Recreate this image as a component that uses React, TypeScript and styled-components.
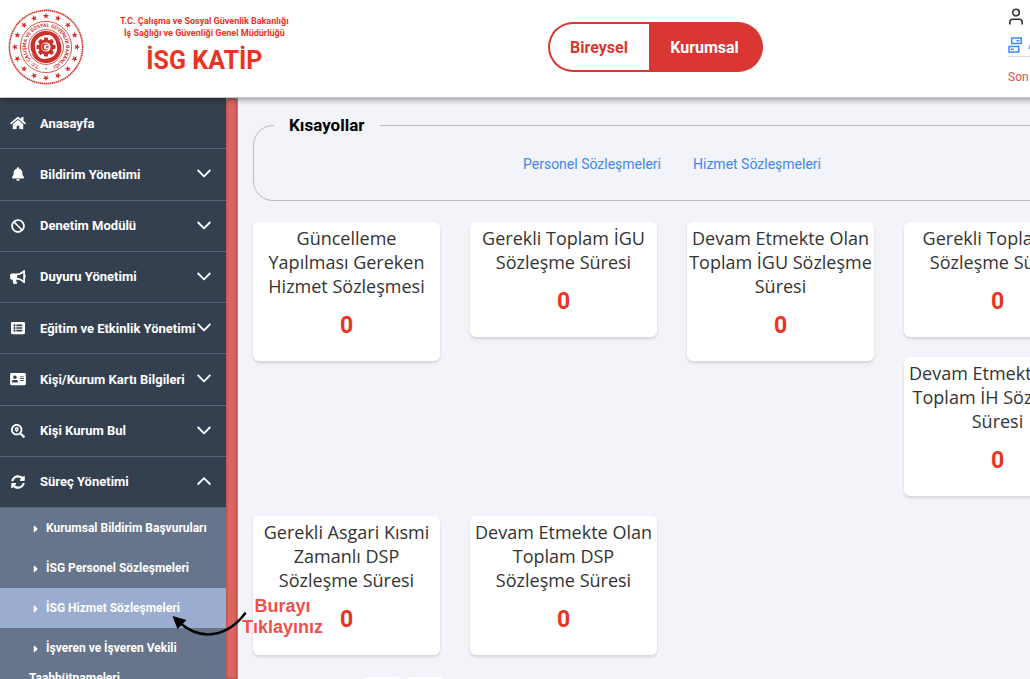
import React from "react";
import styled, { createGlobalStyle } from "styled-components";
import {
  FaHome,
  FaBell,
  FaBan,
  FaBullhorn,
  FaListAlt,
  FaAddressCard,
  FaSearchLocation,
  FaSyncAlt,
  FaCaretRight,
} from "react-icons/fa";

const GlobalStyle = createGlobalStyle`
  * { box-sizing: border-box; }
  body {
    margin: 0;
    background: #f3f4f9;
    font-family: Roboto, "Liberation Sans", sans-serif;
  }
`;

const Shell = styled.div`
  position: relative;
  display: flex;
  flex-direction: column;
  height: 100vh;
  overflow: hidden;
`;

const Header = styled.header`
  position: relative;
  z-index: 2;
  flex: none;
  display: flex;
  align-items: center;
  min-width: 1106px;
  height: 98px;
  padding-left: 8px;
  border-bottom: 1px solid #c4c4c6;
  background: #fff;
  box-shadow: 0 0 8px rgba(0, 0, 0, 0.55);
`;

const Brand = styled.div`
  display: flex;
  align-items: center;
  gap: 36px;
  width: 294px;
  padding-bottom: 4px;
`;

const BrandText = styled.div`
  color: #ec3323;
  font-weight: 700;
  text-align: center;
  white-space: nowrap;
`;

const Ministry = styled.p`
  margin: 0;
  font-size: 9px;
  line-height: 12px;
`;

const AppName = styled.h1`
  margin: 0;
  padding: 6px 0 2px;
  font-size: 25px;
  line-height: 32px;
`;

const Toggle = styled.div`
  display: flex;
  margin: 0 auto 3px;
  padding: 2px;
  height: 50px;
  border-radius: 25px;
  background: #da3732;
`;

const ToggleButton = styled.button<{ $on?: boolean }>`
  width: ${(p) => (p.$on ? 112 : 99)}px;
  padding: 0;
  border: 0;
  border-radius: ${(p) => (p.$on ? "0 23px 23px 0" : "23px 0 0 23px")};
  background: ${(p) => (p.$on ? "#da3732" : "#fff")};
  color: ${(p) => (p.$on ? "#fff" : "#da3732")};
  font: 700 16px Roboto, sans-serif;
`;

const UserBox = styled.div`
  display: flex;
  flex-direction: column;
  align-self: flex-start;
  width: 98px;
  padding-top: 7px;
`;

const UserLine = styled.div<{ $tone: string; $ruled?: boolean }>`
  display: flex;
  align-items: center;
  gap: 5px;
  height: ${(p) => (p.$ruled ? 31 : 19)}px;
  padding-top: ${(p) => (p.$ruled ? 7 : 0)}px;
  border-bottom: ${(p) => (p.$ruled ? "1px solid #dedede" : "0")};
  color: ${(p) => p.$tone};
  font-size: 12px;
`;

const LastLogin = styled.span`
  padding-top: 12px;
  color: #e2504a;
  font-size: 12px;
  line-height: 16px;
`;

const Body = styled.div`
  flex: 1;
  display: flex;
  min-height: 0;
  min-width: 1106px;
`;

const Sidebar = styled.nav`
  flex: none;
  width: 226px;
  overflow: hidden;
  background: #66758b;
  color: #fff;
`;

const MenuList = styled.div`
  display: grid;
  grid-auto-rows: 1fr;
  height: 410px;
  background: #34404f;
`;

const MenuItem = styled.button`
  display: flex;
  align-items: center;
  gap: 14px;
  width: 100%;
  padding: 0 15px 0 10px;
  border: 0;
  border-bottom: 1px solid #5a6678;
  background: none;
  color: #fff;
  font: 700 13px Roboto, sans-serif;
  text-align: left;
  white-space: nowrap;

  > svg:first-child {
    flex: none;
    width: 16px;
  }
`;

const MenuLabel = styled.span`
  flex: 1;
  width: 0;
`;

const SubItem = styled.a<{ $active?: boolean }>`
  display: block;
  padding: 5px 10px 5px 29px;
  background: ${(p) => (p.$active ? "#9aadd0" : "transparent")};
  color: #fff;
  font-size: 12px;
  font-weight: 700;
  line-height: 30px;
  text-decoration: none;

  svg {
    margin: 0 4px 0 1px;
    vertical-align: -3px;
  }
`;

const ScrollTrack = styled.div`
  flex: none;
  width: 12px;
  border-right: 1px solid #8592a8;
  background: #8592a8;
`;

const ScrollThumb = styled.div`
  height: 100%;
  border-radius: 5px 5px 0 0;
  background: #db6661;
  box-shadow: inset 0 0 3px rgba(90, 20, 20, 0.55);
`;

const Main = styled.main`
  flex: 1;
  padding: 17px 15px 0;
`;

const Shortcuts = styled.fieldset`
  display: flex;
  justify-content: center;
  gap: 32px;
  min-width: 0;
  height: 86px;
  margin: 0 0 21px;
  padding: 18px 20px;
  border: 1px solid #bbb;
  border-radius: 20px;

  legend {
    padding: 0 15px;
    color: #000;
    font-size: 17px;
    font-weight: 700;
    line-height: 21px;
  }
`;

const ShortcutLink = styled.a`
  color: #4088f0;
  font-size: 14px;
  line-height: 20px;
  text-decoration: none;
`;

const CardGrid = styled.div`
  display: grid;
  grid-template-columns: repeat(4, minmax(187px, 1fr));
  gap: 20px 30px;
  align-items: start;
`;

const Stack = styled.div`
  display: grid;
  gap: 20px;
`;

const Card = styled.section`
  padding: 4px 2px 23px;
  border-radius: 6px;
  background: #fff;
  box-shadow: 0 2px 3px rgba(60, 50, 30, 0.16);
  font-family: "Open Sans", sans-serif;
  text-align: center;
`;

const CardTitle = styled.h2`
  margin: 0 0 16px;
  color: #333;
  font-size: 18px;
  font-weight: 400;
  line-height: 24px;
`;

const CardValue = styled.p`
  margin: 0;
  color: #ec3323;
  font-family: Roboto, sans-serif;
  font-size: 23px;
  font-weight: 700;
  line-height: 24px;
`;

const Pager = styled.div`
  display: flex;
  gap: 5px;
  margin: 22px 0 0 110px;
`;

const PageButton = styled.button`
  width: 38px;
  height: 30px;
  border: 0;
  border-radius: 5px;
  background: #fff;
`;

const Note = styled.p`
  position: absolute;
  z-index: 3;
  left: 242px;
  top: 596px;
  margin: 0;
  color: #ef504a;
  font: 700 18px/21px "Liberation Sans", sans-serif;
  text-align: center;
`;

const NoteArrow = styled.svg`
  position: absolute;
  z-index: 3;
  left: 170px;
  top: 608px;
`;

const starPoints = (cx: number, cy: number, r: number, turn: number) =>
  Array.from({ length: 10 }, (_, i) => {
    const a = turn + (i * Math.PI) / 5;
    const d = i % 2 ? r * 0.4 : r;
    return `${(cx + d * Math.sin(a)).toFixed(2)},${(cy - d * Math.cos(a)).toFixed(2)}`;
  }).join(" ");

const Seal = () => (
  <svg width="76" height="76" viewBox="0 0 76 76" role="img" aria-label="Bakanlık arması">
    <g fill="none" stroke="#cf2f2b">
      <circle cx="38" cy="38" r="36.6" strokeWidth="1.6" strokeDasharray="1.5 0.5" />
      <circle cx="38" cy="38" r="25.6" strokeWidth="0.8" />
      <circle cx="38" cy="38" r="17.4" strokeWidth="0.8" />
    </g>
    <g fill="#cf2f2b">
      {Array.from({ length: 16 }, (_, i) => {
        const a = (i * Math.PI) / 8;
        return <polygon key={i} points={starPoints(38 + 31 * Math.sin(a), 38 - 31 * Math.cos(a), 3.3, a)} />;
      })}
      <path id="seal-ring" d="M32.5 57.2A20 20 0 1 1 43.5 57.2" fill="none" />
      <text fontFamily="Roboto, sans-serif" fontSize="5" fontWeight="700">
        <textPath href="#seal-ring" startOffset="50%" textAnchor="middle">
          T.C. ÇALIŞMA VE SOSYAL GÜVENLİK BAKANLIĞI
        </textPath>
      </text>
      <circle cx="38" cy="59.5" r="0.8" />
      <path d="M22.5 38C22 28 30 21.5 38.5 22C45 22.3 50.5 26 52.5 32C47 25.5 39 25 33 27.5C27 30 26 36 27.5 41C28.5 46 31.5 49 35 51C28 50 23 45 22.5 38Z" />
      <path d="M53.5 38C54 48 46 54.5 37.5 54C31 53.7 25.5 50 23.5 44C29 50.5 37 51 43 48.5C49 46 50 40 48.5 35C47.5 30 44.5 27 41 25C48 26 53 31 53.5 38Z" />
      {Array.from({ length: 8 }, (_, i) => (
        <rect key={i} x="36" y="28.5" width="4" height="5" rx="0.7" transform={`rotate(${i * 45} 38 38)`} />
      ))}
      <circle cx="38" cy="38" r="7.6" />
    </g>
    <circle cx="38" cy="38" r="4.6" fill="#fff" />
    <circle cx="37.3" cy="38" r="3.4" fill="#cf2f2b" />
    <circle cx="38.3" cy="38" r="2.5" fill="#fff" />
    <polygon points={starPoints(39.2, 38, 1.8, -1.57)} fill="#cf2f2b" />
  </svg>
);

const Chevron = ({ up }: { up?: boolean }) => (
  <svg width="14" height="10" viewBox="0 0 14 10" fill="none" stroke="#fff" strokeWidth="1.8" strokeLinecap="round" strokeLinejoin="round" aria-hidden="true">
    <path d={up ? "M1.2 7L7 1.2L12.8 7" : "M1.2 1.5L7 7.3L12.8 1.5"} />
  </svg>
);

const menu = [
  { icon: FaHome, label: "Anasayfa" },
  { icon: FaBell, label: "Bildirim Yönetimi", sub: true },
  { icon: FaBan, label: "Denetim Modülü", sub: true },
  { icon: FaBullhorn, label: "Duyuru Yönetimi", sub: true },
  { icon: FaListAlt, label: "Eğitim ve Etkinlik Yönetimi", sub: true },
  { icon: FaAddressCard, label: "Kişi/Kurum Kartı Bilgileri", sub: true },
  { icon: FaSearchLocation, label: "Kişi Kurum Bul", sub: true },
  { icon: FaSyncAlt, label: "Süreç Yönetimi", sub: true, open: true },
];

const subMenu = [
  "Kurumsal Bildirim Başvuruları",
  "İSG Personel Sözleşmeleri",
  "İSG Hizmet Sözleşmeleri",
  "İşveren ve İşveren Vekili Taahhütnameleri",
];

const InfoCard = ({ title }: { title: string }) => (
  <Card>
    <CardTitle>{title}</CardTitle>
    <CardValue>0</CardValue>
  </Card>
);

export default function App() {
  return (
    <Shell>
      <GlobalStyle />
      <Header>
        <Brand>
          <Seal />
          <BrandText>
            <Ministry>T.C. Çalışma ve Sosyal Güvenlik Bakanlığı</Ministry>
            <Ministry>İş Sağlığı ve Güvenliği Genel Müdürlüğü</Ministry>
            <AppName>İSG KATİP</AppName>
          </BrandText>
        </Brand>
        <Toggle>
          <ToggleButton type="button">Bireysel</ToggleButton>
          <ToggleButton type="button" $on>Kurumsal</ToggleButton>
        </Toggle>
        <UserBox>
          <UserLine $tone="#333">
            <svg width="16" height="17" viewBox="0 0 16 17" fill="none" stroke="currentColor" strokeWidth="1.6" aria-hidden="true">
              <circle cx="8" cy="4.5" r="3.3" />
              <path d="M1.8 16.5V14.5Q1.8 11.3 5 11.3H11Q14.2 11.3 14.2 14.5V16.5" />
            </svg>
          </UserLine>
          <UserLine $tone="#4088f0" $ruled>
            <svg width="15" height="16" viewBox="0 0 15 16" fill="none" stroke="currentColor" strokeWidth="1.5" aria-hidden="true">
              <path d="M3.7 1H13.3V6.5H3.7ZM1 9.5H10.7V15H1ZM8.5 3.8H11.5M2.8 12.2H5.8" />
            </svg>
            <span>A</span>
          </UserLine>
          <LastLogin>Son</LastLogin>
        </UserBox>
      </Header>
      <Body>
        <Sidebar>
          <MenuList>
            {menu.map(({ icon: Icon, label, sub, open }) => (
              <MenuItem key={label} type="button" aria-expanded={sub ? !!open : undefined}>
                <Icon size={14} />
                <MenuLabel>{label}</MenuLabel>
                {sub && <Chevron up={open} />}
              </MenuItem>
            ))}
          </MenuList>
          {subMenu.map((label, i) => (
            <SubItem key={label} href="#" $active={i === 2}>
              <FaCaretRight size={12} />
              {label}
            </SubItem>
          ))}
        </Sidebar>
        <ScrollTrack>
          <ScrollThumb />
        </ScrollTrack>
        <Main>
          <Shortcuts>
            <legend>Kısayollar</legend>
            <ShortcutLink href="#">Personel Sözleşmeleri</ShortcutLink>
            <ShortcutLink href="#">Hizmet Sözleşmeleri</ShortcutLink>
          </Shortcuts>
          <CardGrid>
            <InfoCard title="Güncelleme Yapılması Gereken Hizmet Sözleşmesi" />
            <InfoCard title="Gerekli Toplam İGU Sözleşme Süresi" />
            <InfoCard title="Devam Etmekte Olan Toplam İGU Sözleşme Süresi" />
            <Stack>
              <InfoCard title="Gerekli Toplam İH Sözleşme Süresi" />
              <InfoCard title="Devam Etmekte Olan Toplam İH Sözleşme Süresi" />
            </Stack>
            <InfoCard title="Gerekli Asgari Kısmi Zamanlı DSP Sözleşme Süresi" />
            <InfoCard title="Devam Etmekte Olan Toplam DSP Sözleşme Süresi" />
          </CardGrid>
          <Pager>
            <PageButton type="button" aria-label="Önceki" />
            <PageButton type="button" aria-label="Sonraki" />
          </Pager>
        </Main>
      </Body>
      <Note>
        Burayı
        <br />
        Tıklayınız
      </Note>
      <NoteArrow width="80" height="30" viewBox="0 0 80 30" aria-hidden="true">
        <path d="M75 5.5C58 28 32 34 10 15" fill="none" stroke="#000" strokeWidth="2.5" strokeLinecap="round" />
        <path d="M2.5 8L16.5 12L7.5 21Z" fill="#000" />
      </NoteArrow>
    </Shell>
  );
}
